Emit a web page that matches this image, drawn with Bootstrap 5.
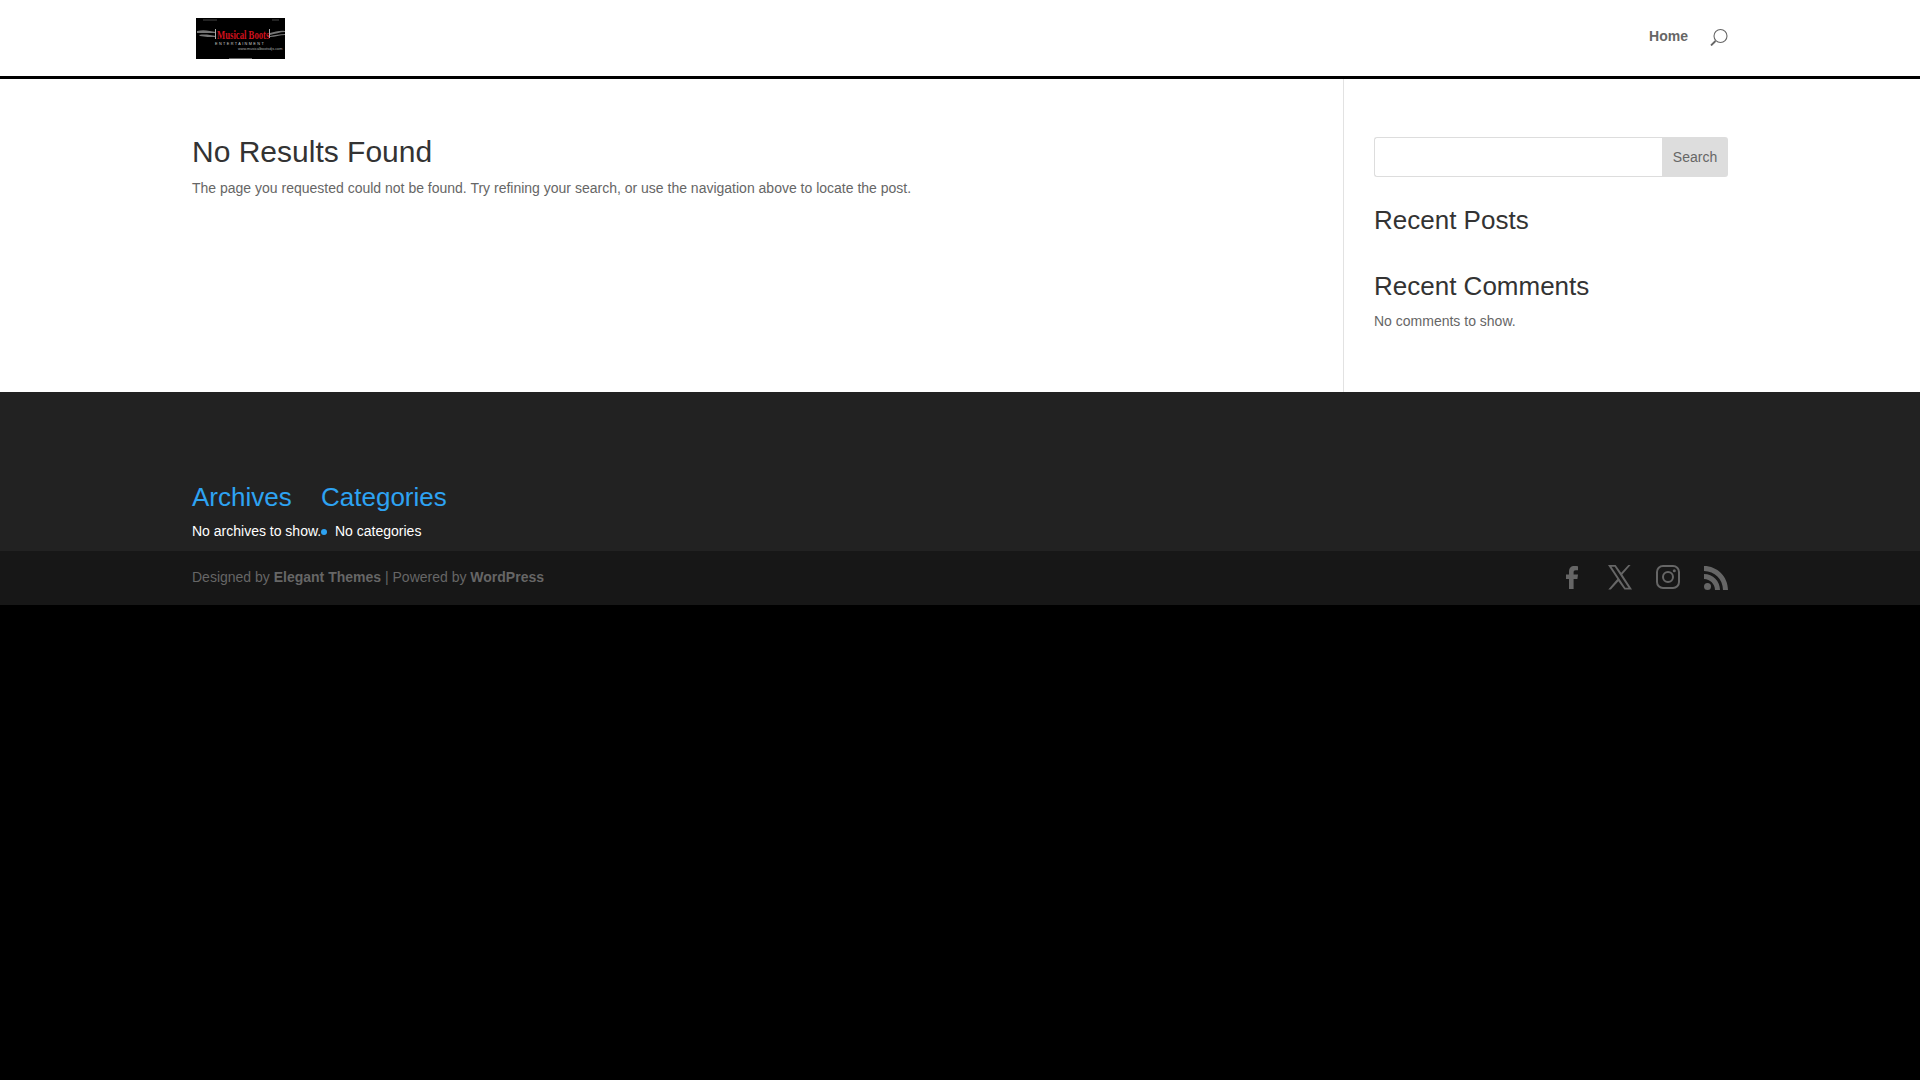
<!DOCTYPE html>
<html lang="en">
<head>
<meta charset="utf-8">
<title>No Results Found</title>
<link href="https://cdn.jsdelivr.net/npm/bootstrap@5.3.0/dist/css/bootstrap.min.css" rel="stylesheet">
<style>
body{background:#000;font-family:"Liberation Sans",Arial,sans-serif;font-size:14px;color:#666;line-height:1.7;}
.wrap80{width:1536px;margin:0 auto;}
.site-top{background:#fff;height:79px;border-bottom:3px solid #000;}
.logo-box{margin-left:4px;width:89px;height:41px;margin-top:18px;display:block;}
.top-home{color:#666;font-weight:700;font-size:14px;line-height:1;margin-top:29px;text-decoration:none;}
.top-search{margin-top:28px;margin-left:22px;display:block;}
.site-main{background:#fff;height:313px;}
.main-col{width:1151px;padding-top:55px;}
.side-col{width:385px;border-left:1px solid #e2e2e2;padding:58px 0 0 30px;}
h1.big-title{font-size:30px;line-height:36px;font-weight:500;color:#333;margin:0 0 6px;}
.main-col p{margin:0;line-height:24px;}
.search-line{height:40px;}
.search-in{flex:1;min-width:0;border:1px solid #ddd;border-right:0;border-radius:3px 0 0 3px;background:#fff;}
.search-go{width:66px;border:0;background:#ddd;color:#666;font-size:14px;border-radius:0 3px 3px 0;padding:1px 0 0;}
h4.side-title{font-size:26px;line-height:31px;font-weight:500;color:#333;margin:0;}
h4.side-first{margin-top:28px;}
h4.side-second{margin-top:35px;}
.side-col p{margin:7px 0 0;line-height:24px;}
.foot-widgets{background:#222;height:159px;padding-top:90px;}
.foot-title{font-size:26px;line-height:31px;font-weight:500;color:#2ea3f2;margin:0 0 6px;}
.foot-text{color:#fff;line-height:24px;margin:0;display:block;white-space:nowrap;}
.foot-dot{width:6px;height:6px;border-radius:50%;background:#2ea3f2;position:absolute;left:0;top:47px;}
.foot-arch{width:129px;}
.foot-cat{position:relative;}
.foot-cat .foot-text{padding-left:14px;}
.foot-bar{background:#171717;height:54px;}
.foot-credit{color:#666;line-height:53px;}
.foot-credit b{color:#666;}
.foot-icons{gap:24px;padding-top:14px;}
.foot-icons svg{display:block;fill:#666;}
</style>
</head>
<body>
<header class="site-top">
  <div class="wrap80 d-flex justify-content-between">
    <svg class="logo-box" viewBox="0 0 89 41" role="img" aria-label="Musical Boots Entertainment">
      <rect width="89" height="41" fill="#000"/>
      <path d="M7 2h14M76 2h7" stroke="#666" stroke-width=".7"/>
      <path d="M1 13c7-2 13 0 19 1v1C14 15 8 15 1 15zM3 17c6-1 11 0 17 1v1c-6 0-11 0-16-1zM74 15c5-1 10-3 15-2v1c-5 0-10 2-15 3zM74 18c5-1 10-2 15-2v1c-5 0-10 2-15 2z" fill="#777"/>
      <path d="M19.500 11v10M73.500 11v9" stroke="#aaa"/>
      <text transform="translate(21 21) scale(1 1.500)" font-family="Liberation Serif,serif" font-size="8.700" font-weight="700" fill="#d0101c">Musical Boots</text>
      <text x="19" y="26.500" font-family="Liberation Sans,sans-serif" font-size="3.800" letter-spacing="1.400" fill="#ccc">ENTERTAINMENT</text>
      <text x="42" y="32" font-family="Liberation Sans,sans-serif" font-size="3.800" fill="#aaa">www.musicalbootsdjs.com</text>
      <rect x="33" y="40" width="23" height="1" fill="#666"/>
    </svg>
    <div class="d-flex align-items-start">
      <a class="top-home" href="#">Home</a>
      <svg class="top-search" width="18" height="18" viewBox="0 0 18 18" fill="none" stroke="#666"><circle cx="10.500" cy="8" r="6.500" stroke-width="1.100"/><path d="M5.500 13 1 17.500" stroke-width="1.800"/></svg>
    </div>
  </div>
</header>
<main class="site-main">
  <div class="wrap80 d-flex h-100">
    <div class="main-col">
      <h1 class="big-title">No Results Found</h1>
      <p>The page you requested could not be found. Try refining your search, or use the navigation above to locate the post.</p>
    </div>
    <aside class="side-col">
      <div class="search-line d-flex">
        <input class="search-in" type="text" aria-label="Search">
        <button class="search-go" type="button">Search</button>
      </div>
      <h4 class="side-title side-first">Recent Posts</h4>
      <h4 class="side-title side-second">Recent Comments</h4>
      <p>No comments to show.</p>
    </aside>
  </div>
</main>
<section class="foot-widgets">
  <div class="wrap80 d-flex">
    <div class="foot-arch">
      <h4 class="foot-title">Archives</h4>
      <span class="foot-text">No archives to show.</span>
    </div>
    <div class="foot-cat">
      <h4 class="foot-title">Categories</h4>
      <span class="foot-dot"></span>
      <span class="foot-text">No categories</span>
    </div>
  </div>
</section>
<footer class="foot-bar">
  <div class="wrap80 d-flex justify-content-between">
    <div class="foot-credit">Designed by <b>Elegant Themes</b> | Powered by <b>WordPress</b></div>
    <div class="d-flex foot-icons">
      <svg width="24" height="24" viewBox="0 0 24 24"><path d="M9 24.500V14H6V9.500h3V6.800C9 3 11 1 14.300 1c1.700 0 3 .1 3.700.2V5.200h-2.200c-1.700 0-2.200.8-2.200 2v2.300H18l-.6 4.500h-3.800v10.500z"/></svg>
      <svg width="24" height="25" viewBox="0 0 24 25"><path d="M0 0h7.600l5.600 7.800L20.300 0h2.300l-8.300 9.500L24 24.500h-7.600l-6-8.300L2.800 24.500H.3l9-10.400zm3.500 1.700L17.300 22.800h3.200L6.700 1.700z"/></svg>
      <svg width="24" height="24" viewBox="0 0 24 24"><rect x="1" y="1" width="22" height="22" rx="6" fill="none" stroke="#666" stroke-width="2"/><circle cx="12" cy="12" r="5" fill="none" stroke="#666" stroke-width="2"/><circle cx="18.300" cy="5.700" r="1.500"/></svg>
      <svg width="24" height="25" viewBox="0 0 24 25"><circle cx="3.500" cy="21.500" r="3.500"/><path d="M0 9v5c6 0 11 5 11 11h5C16 16 9 9 0 9z"/><path d="M0 1v5c10.500 0 19 8.500 19 19h5C24 11.700 13.300 1 0 1z"/></svg>
    </div>
  </div>
</footer>
</body>
</html>
